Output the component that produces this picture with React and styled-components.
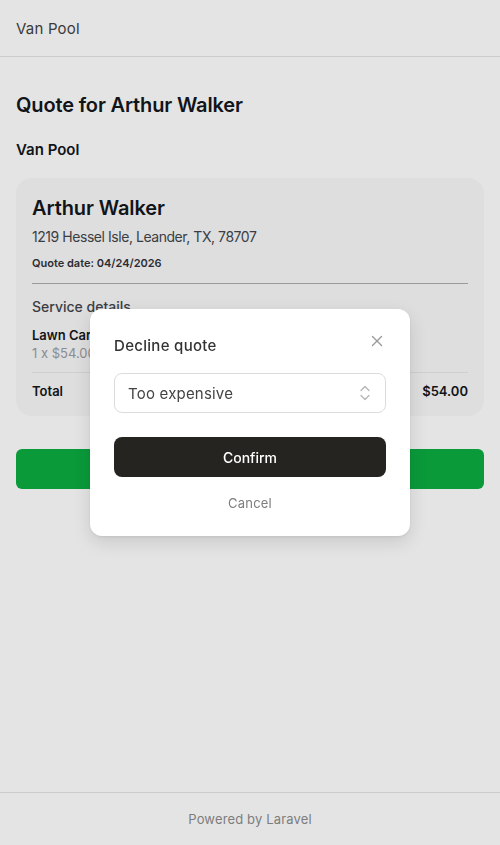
import React from "react";
import styled, { createGlobalStyle } from "styled-components";

const Global = createGlobalStyle`
  html, body { margin: 0; padding: 0; }
  body { background: #e4e4e4; font-family: Inter, "Noto Sans", sans-serif; color: #1b1b1f; }
  * { box-sizing: border-box; }
`;

const Page = styled.div`
  min-height: 845px;
  display: flex;
  flex-direction: column;
`;

const Header = styled.header`
  height: 57px;
  border-bottom: 1px solid #cbcbcb;
  display: flex;
  align-items: center;
  padding: 0 16px;
  font-size: 15px;
  color: #3a3a3a;
  letter-spacing: 0.2px;
`;

const Main = styled.main`
  flex: 1;
  padding: 36px 16px 0;
  display: flex;
  flex-direction: column;
`;

const Title = styled.h1`
  margin: 0;
  font-size: 20px;
  font-weight: 600;
  letter-spacing: -0.15px;
  color: #111418;
  line-height: 24px;
`;

const Company = styled.h2`
  margin: 23px 0 0;
  font-size: 15px;
  font-weight: 600;
  color: #111418;
  line-height: 20px;
  letter-spacing: 0;
`;

const Card = styled.section`
  margin-top: 18px;
  background: #dedede;
  border-radius: 16px;
  padding: 17px 16px 16px;
  display: flex;
  flex-direction: column;
`;

const Name = styled.div`
  font-size: 20px;
  font-weight: 600;
  letter-spacing: -0.1px;
  color: #111418;
  line-height: 26px;
`;

const Address = styled.div`
  margin-top: 7px;
  font-size: 14px;
  color: #3b3d44;
  letter-spacing: -0.45px;
  line-height: 18px;
`;

const QuoteDate = styled.div`
  margin-top: 9px;
  font-size: 11px;
  font-weight: 600;
  color: #2b2d33;
  line-height: 16px;
`;

const Divider = styled.hr`
  margin: ${p => p.$m || "12px 0"};
  border: none;
  border-top: 1px solid ${p => p.$c || "#9a9a9a"};
`;

const Section = styled.div`
  font-size: 14px;
  font-weight: 500;
  color: #3b3d44;
  line-height: 18px;
`;

const ItemName = styled.div`
  margin-top: 10px;
  font-size: 13px;
  font-weight: 600;
  color: #111418;
  line-height: 18px;
`;

const ItemSub = styled.div`
  font-size: 13px;
  color: #8a8c92;
  line-height: 18px;
`;

const TotalRow = styled.div`
  display: flex;
  justify-content: space-between;
  font-size: 13px;
  font-weight: 600;
  color: #111418;
  line-height: 18px;
`;

const GreenButton = styled.button`
  margin-top: 33px;
  height: 40px;
  border: none;
  border-radius: 6px;
  background: #0a9a3a;
  width: 100%;
`;

const Footer = styled.footer`
  height: 53px;
  border-top: 1px solid #cbcbcb;
  display: flex;
  align-items: center;
  justify-content: center;
  font-size: 13px;
  letter-spacing: 0.15px;
  color: #7d7d7d;
`;

const Modal = styled.div`
  position: fixed;
  left: 90px;
  top: 309px;
  width: 320px;
  background: #fff;
  border-radius: 12px;
  box-shadow: 0 6px 18px rgba(0, 0, 0, 0.12), 0 1px 3px rgba(0,0,0,0.08);
  padding: 24px 24px 22px;
  display: flex;
  flex-direction: column;
`;

const ModalHead = styled.div`
  display: flex;
  justify-content: space-between;
  align-items: flex-start;
`;

const ModalTitle = styled.div`
  font-size: 15px;
  font-weight: 500;
  color: #333;
  line-height: 24px;
  letter-spacing: 0.3px;
  margin-top: 1px;
`;

const Close = styled.button`
  border: none;
  background: none;
  padding: 0;
  margin-top: 0;
  margin-right: 1px;
  color: #9a9a9a;
  display: flex;
`;

const Select = styled.div`
  margin-top: 15px;
  height: 40px;
  border: 1px solid #dcdcdc;
  border-radius: 8px;
  display: flex;
  align-items: center;
  justify-content: space-between;
  padding: 0 14px 0 13px;
  font-size: 15px;
  letter-spacing: 0.2px;
  color: #444;
`;

const Confirm = styled.button`
  margin-top: 24px;
  height: 40px;
  border: none;
  border-radius: 8px;
  background: #262421;
  color: #fff;
  font-family: inherit;
  font-size: 14px;
  font-weight: 500;
`;

const Cancel = styled.button`
  margin-top: 15px;
  border: none;
  background: none;
  font-family: inherit;
  font-size: 13px;
  letter-spacing: 0.2px;
  color: #7d7d7d;
  line-height: 20px;
`;

export default function App() {
  return (
    <>
      <Global />
      <Page>
        <Header>Van Pool</Header>
        <Main>
          <Title>Quote for Arthur Walker</Title>
          <Company>Van Pool</Company>
          <Card>
            <Name>Arthur Walker</Name>
            <Address>1219 Hessel Isle, Leander, TX, 78707</Address>
            <QuoteDate>Quote date: 04/24/2026</QuoteDate>
            <Divider $m="12px 0 14px" />
            <Section>Service details</Section>
            <ItemName>Lawn Care</ItemName>
            <ItemSub>1 x $54.00</ItemSub>
            <Divider $c="#cfcfcf" $m="10px 0 9px" />
            <TotalRow>
              <span>Total</span>
              <span>$54.00</span>
            </TotalRow>
          </Card>
          <GreenButton />
        </Main>
        <Footer>Powered by Laravel</Footer>
      </Page>
      <Modal>
        <ModalHead>
          <ModalTitle>Decline quote</ModalTitle>
          <Close aria-label="Close">
            <svg width="16" height="16" viewBox="0 0 16 16" fill="none" stroke="currentColor" strokeWidth="1.4" strokeLinecap="round">
              <path d="M3.5 3.5l9 9M12.5 3.5l-9 9" />
            </svg>
          </Close>
        </ModalHead>
        <Select>
          <span>Too expensive</span>
          <svg width="12" height="18" viewBox="0 0 12 18" fill="none" stroke="#b5b5b5" strokeWidth="1.3" strokeLinecap="round" strokeLinejoin="round">
            <path d="M2 6.5L6 2.5l4 4M2 11.5l4 4 4-4" />
          </svg>
        </Select>
        <Confirm>Confirm</Confirm>
        <Cancel>Cancel</Cancel>
      </Modal>
    </>
  );
}
